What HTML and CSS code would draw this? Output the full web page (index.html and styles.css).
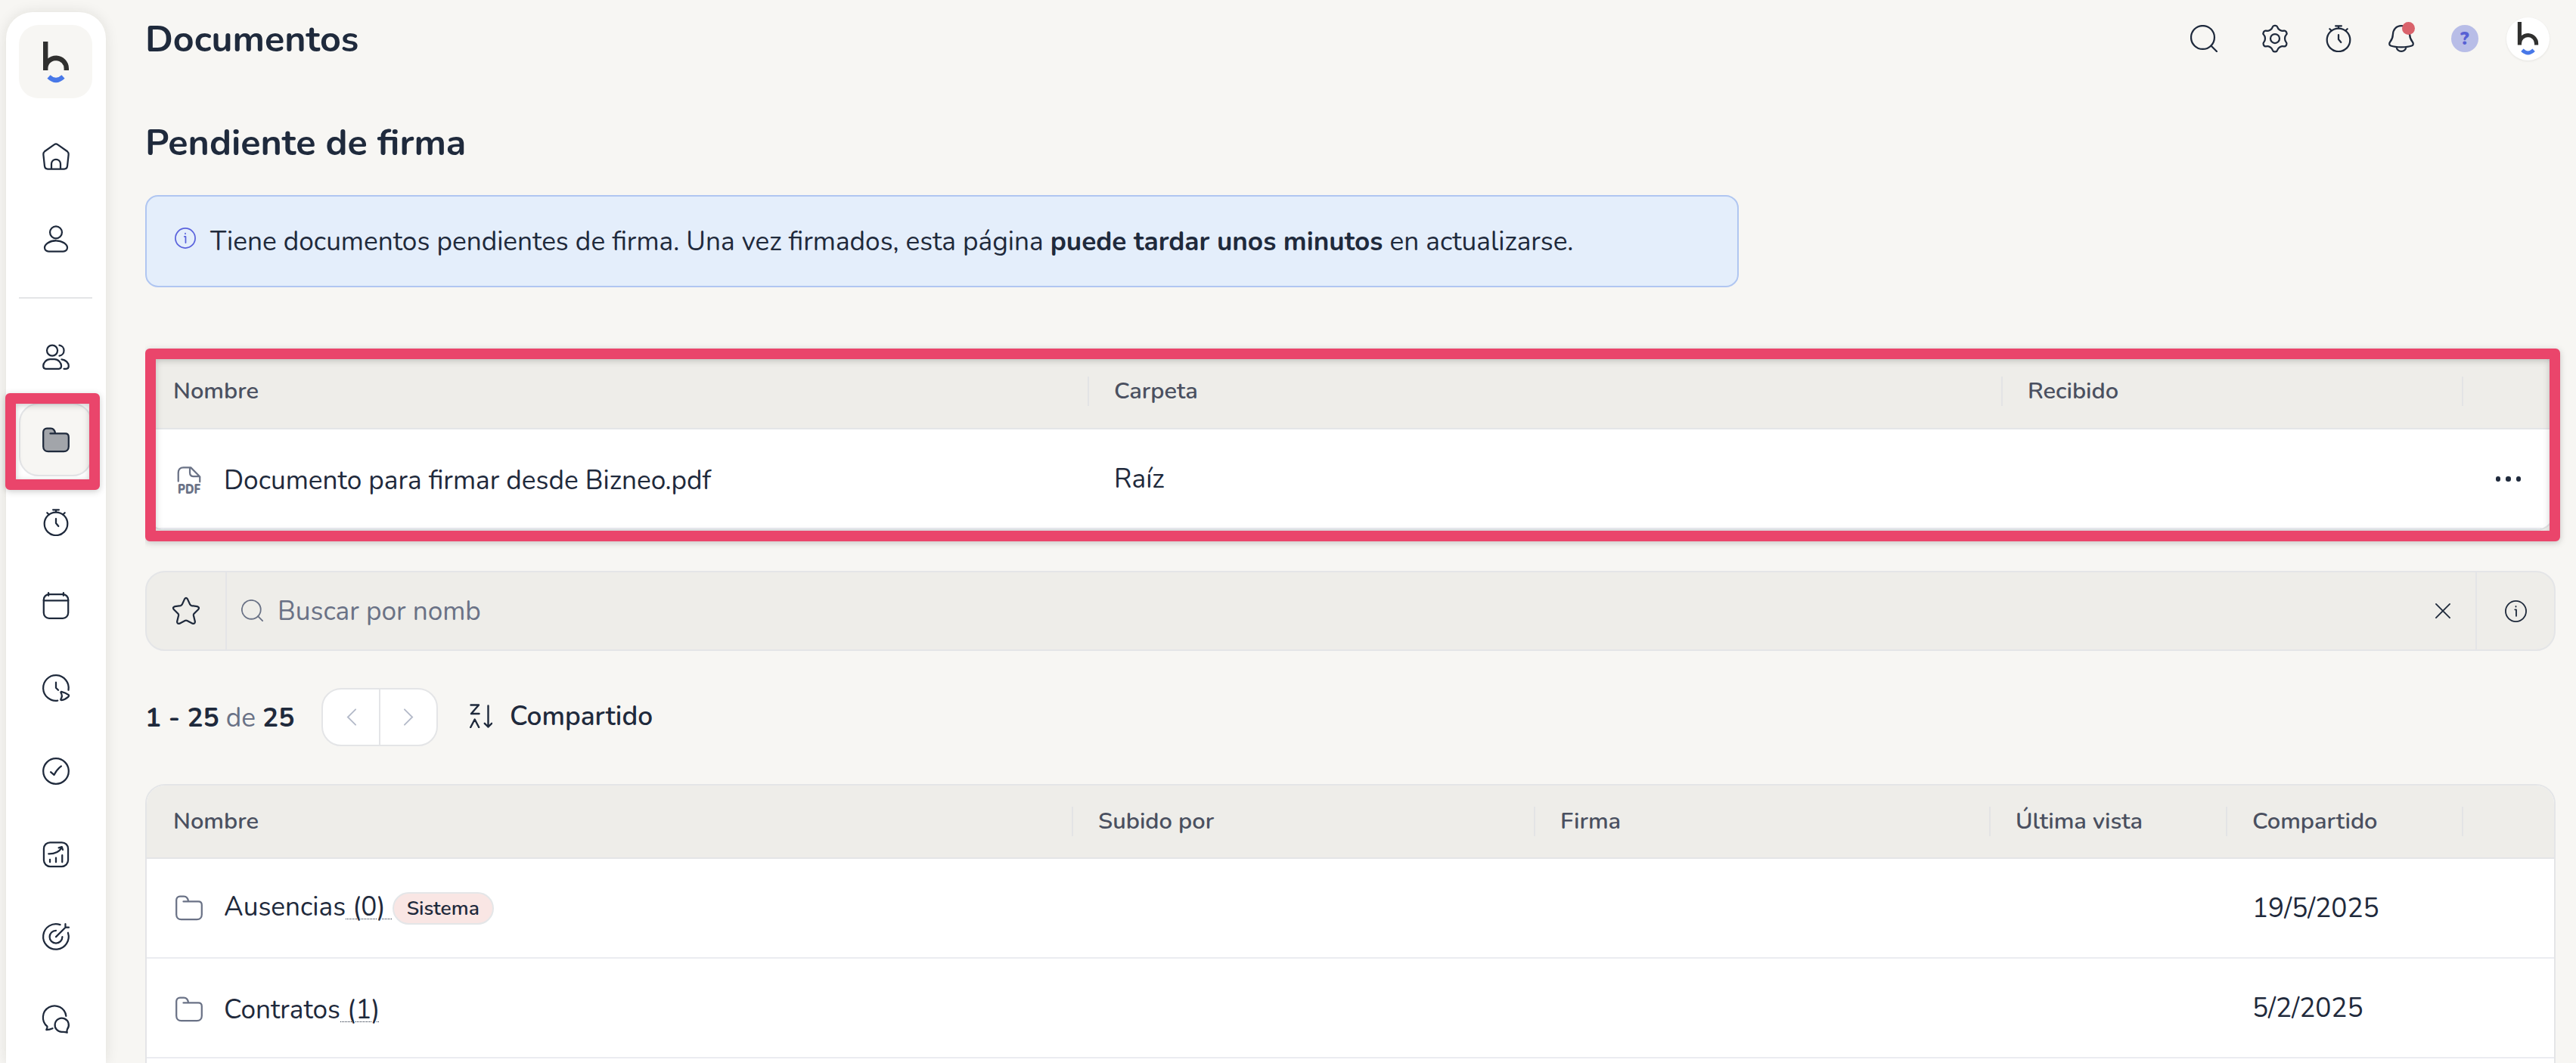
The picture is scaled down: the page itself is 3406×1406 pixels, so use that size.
FILE: index.html
```html
<!DOCTYPE html>
<html lang="es">
<head>
<meta charset="utf-8">
<title>Documentos</title>
<link rel="stylesheet" href="styles.css">
</head>
<body>
<svg width="0" height="0" class="defs" aria-hidden="true">
  <symbol id="folder" viewBox="0 0 24 24"><path d="M7 6.3H20.2c1.8 0 3 1.2 3 3v8.5c0 2.6-1.8 4.3-4.3 4.3H5.1c-2.5 0-4.3-1.7-4.3-4.3V5c0-1.9 1.3-3.2 3.2-3.2h3.4c2.3 0 3.6 1.6 4 4.5"/></symbol>
  <symbol id="stopwatch" viewBox="0 0 24 24"><circle cx="12" cy="13.2" r="10.2"/><path d="M9.4.9h5.2M12 .9v2M4.2 3.5 5.8 5M19.8 3.5 18.2 5M12 8.8v3.9l2.2 2.6"/></symbol>
  <symbol id="info" viewBox="0 0 24 24"><circle cx="12" cy="12" r="11.2"/><path d="M11 10.2h1.4v7M12 6.6v.5"/></symbol>
  <symbol id="search" viewBox="0 0 24 24"><circle cx="11" cy="11" r="10.3"/><path d="m18.3 18.3 5 5"/></symbol>
  <symbol id="brand" viewBox="0 0 36 56"><path d="M4.2 0v38M4.2 38V35.500a14.200 13.700 0 0 1 14.200-13.700 14.200 13.700 0 0 1 13.400 13.700V38" fill="none" stroke="#30302f" stroke-width="6.400"/><path d="M8.500 46.500Q18 55.500 27.500 46.500" fill="none" stroke="#4878e8" stroke-width="6"/></symbol>
</svg>

<nav class="sidebar">
  <div class="logo"><svg class="brand"><use href="#brand"/></svg></div>
  <a class="item"><svg class="icon" viewBox="0 0 24 24"><path d="M10.600 1.400 2 7.500Q.7 8.600.9 10.300L2 20.600Q2.300 23 4.700 23H19.300Q21.700 23 22 20.600L23.100 10.300Q23.300 8.600 22 7.500L13.400 1.400Q12 .5 10.600 1.400ZM8 23V18.500a4 4 0 0 1 8 0V23"/></svg></a>
  <a class="item"><svg class="icon" viewBox="0 0 24 24"><circle cx="12" cy="6.200" r="5.300"/><path d="M12 13.500c5.500 0 10 3.200 10 6.200 0 2-1.500 3.300-3.600 3.300H5.600C3.500 23 2 21.700 2 19.700c0-3 4.500-6.200 10-6.200Z"/></svg></a>
  <hr class="rule">
  <a class="item"><svg class="icon" viewBox="0 0 24 24"><circle cx="8.700" cy="6.400" r="4.700"/><path d="M15 1.800a4.700 4.700 0 0 1 0 9.300M6.800 14h3.900c3.300 0 6 3.200 6 6 0 1.800-.9 2.500-2.200 2.500H3C1.700 22.500.8 21.800.8 20c0-2.800 2.700-6 6-6ZM17 14.200c3.600.4 6.200 3 6.200 6 0 1.600-.9 2.300-2.200 2.300h-2"/></svg></a>
  <a class="item active"><span class="tile"><svg class="icon filled"><use href="#folder"/></svg></span><span class="callout callout-nav"></span></a>
  <a class="item"><svg class="icon"><use href="#stopwatch"/></svg></a>
  <a class="item"><svg class="icon" viewBox="0 0 24 24"><rect x="1.200" y="2" width="21.600" height="21.200" rx="4.800"/><path d="M1.200 7.600h21.600M5.400.7v2.500M18.600.7v2.500"/></svg></a>
  <a class="item"><svg class="icon" viewBox="0 0 24 24"><path d="M23 13.800A11.200 11.200 0 1 0 13.500 23.100M12 7v4.800l2 2M16.700 15.200q3.500.8 6.200 2.700.9.900 0 1.800-2.700 2.500-6.200 3-.8-.3-.3-1.200 1.600-2.600.1-5-.5-1 .2-1.300z"/></svg></a>
  <a class="item"><svg class="icon" viewBox="0 0 24 24"><circle cx="12" cy="12" r="11.200"/><path d="M7.400 12.800 10.300 15.300Q12.600 10.600 16.600 7.600"/></svg></a>
  <a class="item"><svg class="icon" viewBox="0 0 24 24"><rect x="1.300" y="1.500" width="21.400" height="21.200" rx="5.500"/><path d="M5.500 11.600Q13.500 11.800 17 6.200M14.400 6.200 17.200 5.400 18 8M6.700 16.500v2.400M12 15v3.900M17.500 12.800v6.100"/></svg></a>
  <a class="item"><svg class="icon" viewBox="0 0 24 24"><path d="M15.700 1.400A11.200 11.200 0 1 0 22.600 8.500M12 6.500a5.600 5.600 0 1 0 5.600 5.600M12 12.100 20.300 3.800M20.300 3.800V.8M20.300 3.800h3"/></svg></a>
  <a class="item"><svg class="icon" viewBox="0 0 24 24"><path d="M20.900 8.600A10.200 10.200 0 1 0 4.300 17.700Q4.500 19 3.500 20.700 6 20.800 9 19.500M22 20.200A6.100 6.100 0 1 0 17.500 22.600Q20 22.500 21.800 23.200 21.300 21.600 22 20.200Z"/></svg></a>
</nav>

<main class="main">
  <header class="topbar">
    <h1 class="title">Documentos</h1>
    <div class="tools">
      <span class="tool tool-search"><svg class="icon"><use href="#search"/></svg></span>
      <span class="tool"><svg class="icon" viewBox="0 0 24 24"><g transform="translate(12 12)"><path d="M-2.100-10.200Q-1.700-11.500-.4-11.500H.4Q1.700-11.500 2.100-10.200C2.700-8 5.580-6.340 7.780-6.920Q9.110-7.220 9.760-6.100L10.160-5.400Q10.810-4.280 9.880-3.280C8.280-1.660 8.280 1.660 9.880 3.280Q10.810 4.280 10.160 5.400L9.760 6.100Q9.110 7.220 7.780 6.920C5.580 6.340 2.700 8 2.100 10.200Q1.700 11.500.4 11.500H-.4Q-1.700 11.500-2.100 10.200C-2.700 8-5.580 6.340-7.780 6.920Q-9.110 7.220-9.760 6.100L-10.160 5.400Q-10.810 4.280-9.880 3.280C-8.280 1.660-8.280-1.660-9.880-3.280Q-10.810-4.280-10.160-5.400L-9.760-6.100Q-9.110-7.220-7.780-6.920C-5.580-6.340-2.700-8-2.100-10.200Z"/><circle r="4"/></g></svg></span>
      <span class="tool"><svg class="icon"><use href="#stopwatch"/></svg></span>
      <span class="tool"><svg class="icon" viewBox="0 0 24 24"><path d="M12 .8c-4.600 0-7.200 3.300-7.400 7.600-.1 3.400-.9 4.600-2.500 6.600-.9 1.200-.9 2.800.6 3.300 2.800 1 6 1.200 9.300 1.200s6.500-.2 9.300-1.200c1.500-.5 1.500-2.100.6-3.300-1.600-2-2.400-3.200-2.500-6.600C19.200 4.100 16.600.8 12 .8ZM7.600 19.500c.5 2.200 2.200 3.700 4.400 3.700s3.900-1.500 4.400-3.700"/></svg><i class="dot"></i></span>
      <span class="tool"><b class="help">?</b></span>
      <span class="tool"><span class="avatar"><svg class="brand brand-small"><use href="#brand"/></svg></span></span>
    </div>
  </header>

  <h2 class="subtitle">Pendiente de firma</h2>
  <div class="notice">
    <svg class="icon notice-icon"><use href="#info"/></svg>
    <p>Tiene documentos pendientes de firma. Una vez firmados, esta página <b>puede tardar unos minutos</b> en actualizarse.</p>
  </div>

  <section class="pending">
    <div class="table cols-pending">
      <div class="head"><span>Nombre</span><span>Carpeta</span><span>Recibido</span><span></span></div>
      <div class="row">
        <div class="cell name low">
          <svg class="icon soft" viewBox="0 0 24 24"><path d="M2.500 13V5.500C2.500 2.600 4.300.9 7 .9h6.500L21.500 9v4.500M12.700 1v4.500c0 2.100 1.200 3.300 3.300 3.300h5.200"/><text x="2" y="24" textLength="20" lengthAdjust="spacingAndGlyphs" class="pdf">PDF</text></svg>
          <span class="label">Documento para firmar desde Bizneo.pdf</span>
        </div>
        <div class="cell">Raíz</div>
        <div class="cell"></div>
        <div class="cell more"><i></i><i></i><i></i></div>
      </div>
    </div>
    <span class="callout callout-table"></span>
  </section>

  <div class="searchbar">
    <span class="fav"><svg class="icon" viewBox="0 0 24 24"><path d="M10.700 1.600Q12-.5 13.300 1.600L15.500 6.400Q15.900 7.200 16.800 7.400L21.800 8.100Q24.300 8.800 22.700 10.800L19 14.500Q18.500 15.200 18.600 16L19.900 21.300Q20 23.800 17.700 23.100L13 20.700Q12 20.200 11 20.700L6.300 23.100Q4 23.800 4.100 21.300L5.400 16Q5.500 15.200 5 14.500L1.300 10.800Q-.3 8.800 2.200 8.100L7.200 7.400Q8.100 7.200 8.500 6.400Z"/></svg></span>
    <span class="field"><svg class="icon soft thin"><use href="#search"/></svg><span>Buscar por nomb</span></span>
    <svg class="icon clear" viewBox="0 0 22 22"><path d="m1 1 20 20M21 1 1 21"/></svg>
    <span class="hint"><svg class="icon"><use href="#info"/></svg></span>
  </div>

  <div class="pager">
    <span class="range"><b>1 - 25</b> de <b>25</b></span>
    <span class="steps">
      <span><svg viewBox="0 0 14 24"><path d="M13 1 2 12l11 11"/></svg></span>
      <span><svg viewBox="0 0 14 24"><path d="m1 1 11 11L1 23"/></svg></span>
    </span>
    <span class="sort">
      <svg viewBox="0 0 30 32"><path d="M1.500 1.500h10.500L2 13h10.500M1.200 31 6.700 20.500 12.200 31M24.500 2.500v28M19.800 25.800l4.700 4.700 4.700-4.700"/></svg>
      <span>Compartido</span>
    </span>
  </div>

  <div class="table cols-docs">
    <div class="head"><span>Nombre</span><span>Subido por</span><span>Firma</span><span>Última vista</span><span>Compartido</span><span></span></div>
    <div class="row">
      <div class="cell name tagged">
        <svg class="icon soft"><use href="#folder"/></svg>
        <span class="label">Ausencias<span class="count"> (0) </span></span><span class="badge">Sistema</span>
      </div>
      <div class="cell"></div><div class="cell"></div><div class="cell"></div>
      <div class="cell">19/5/2025</div>
      <div class="cell"></div>
    </div>
    <div class="row">
      <div class="cell name low">
        <svg class="icon soft"><use href="#folder"/></svg>
        <span class="label">Contratos<span class="count"> (1)</span></span>
      </div>
      <div class="cell"></div><div class="cell"></div><div class="cell"></div>
      <div class="cell">5/2/2025</div>
      <div class="cell"></div>
    </div>
  </div>
</main>
</body>
</html>
```
FILE: styles.css
```css
* { box-sizing: border-box; }

:root {
  --ink: #1f2a3c;
  --soft: #6a7286;
  --line: #e4e5e7;
  --page: #f7f6f3;
  --shade: #eeede9;
  --pink: #ea456b;
}

body {
  margin: 0;
  height: 1406px;
  overflow: hidden;
  display: flex;
  background: var(--page);
  color: var(--ink);
  font: 400 35.2px/48px Nunito, "Noto Sans", sans-serif;
}

.defs { position: absolute; }

.icon {
  width: 36px;
  height: 36px;
  flex: none;
  display: block;
  overflow: visible;
  fill: none;
  stroke: var(--ink);
  stroke-width: 1.5;
  stroke-linecap: round;
  stroke-linejoin: round;
}
.soft { stroke: var(--soft); }
.filled { fill: #a2a5aa; }

/* Sidebar */
.sidebar {
  flex: none;
  width: 132px;
  height: 1390px;
  margin: 16px 0 0 8px;
  padding: 17px 1px 0 0;
  display: flex;
  flex-direction: column;
  align-items: center;
  background: #fff;
  border-radius: 35px 35px 0 0;
  box-shadow: 0 0 18px rgba(30, 30, 20, .1);
}
.logo {
  width: 97px;
  height: 97px;
  margin-bottom: 22px;
  display: flex;
  justify-content: center;
  padding-top: 22px;
  border-radius: 26px;
  background: var(--page);
}
.brand { width: 36px; height: 56px; display: block; }
.brand-small { width: 29px; height: 45px; }
.item {
  position: relative;
  width: 97px;
  height: 109.6px;
  flex: none;
  display: flex;
  align-items: center;
  justify-content: center;
}
.rule {
  width: 97px;
  height: 2px;
  margin: 22px 0;
  border: 0;
  flex: none;
  background: var(--line);
}
.tile {
  width: 97px;
  height: 97px;
  display: flex;
  align-items: center;
  justify-content: center;
  border: 2px solid var(--line);
  border-radius: 26px;
  background: var(--page);
}

/* Highlight frames drawn over the interface */
.callout {
  position: absolute;
  border: 14px solid var(--pink);
  border-radius: 6px;
  filter: drop-shadow(0 2px 4px rgba(0, 0, 0, .2));
}
.callout-nav { left: -18px; top: -7px; width: 125px; height: 128px; }
.callout-table { left: 0; top: -8px; width: 3193px; height: 255px; }

/* Page */
.main {
  flex: none;
  width: 3206px;
  height: 1406px;
  overflow: clip;
  margin-left: 52px;
  padding-right: 19px;
}
.topbar {
  height: 102px;
  display: flex;
  align-items: center;
  justify-content: space-between;
}
.title, .subtitle {
  margin: 0;
  font-size: 48.4px;
  line-height: 66px;
  font-weight: 700;
}
.title { padding-top: 2px; }
.subtitle { margin: 54px 0 36px; }
.tools { display: flex; margin-right: -5px; }
.tool {
  position: relative;
  width: 83.5px;
  height: 60px;
  display: flex;
  align-items: center;
  justify-content: center;
}
.tool-search { margin-right: 11px; }
.dot {
  position: absolute;
  left: 42px;
  top: 8px;
  width: 17px;
  height: 17px;
  border-radius: 50%;
  background: #d9626b;
}
.help {
  width: 36px;
  height: 36px;
  border-radius: 50%;
  background: #b8bde7;
  color: #5761d4;
  font-size: 24px;
  line-height: 37px;
  font-weight: 900;
  text-align: center;
}
.avatar {
  width: 57px;
  height: 57px;
  display: flex;
  justify-content: center;
  padding-top: 6px;
  border-radius: 50%;
  background: #fff;
  box-shadow: 0 1px 3px rgba(0, 0, 0, .08);
}

.notice {
  width: 2107px;
  height: 122px;
  padding-left: 37px;
  display: flex;
  align-items: center;
  gap: 19px;
  border: 2px solid #b0c6f1;
  border-radius: 17px;
  background: #e4eefb;
}
.notice p { margin: 0; }
.notice-icon {
  width: 28px;
  height: 28px;
  margin-bottom: 9px;
  stroke: #5a63dd;
}

/* Tables */
.table {
  width: 3187px;
  overflow: hidden;
  border: 2px solid var(--line);
  border-radius: 26px;
  background: #fff;
}
.cols-docs {
  height: 400px;
  border-radius: 26px 26px 0 0;
}
.head, .row { display: grid; }
.cols-pending > div { grid-template-columns: 1245px 1208px 609px 1fr; }
.cols-docs > div { grid-template-columns: 1224px 611px 602px 313px 312px 1fr; }
.head {
  height: 97px;
  border-bottom: 2px solid var(--line);
  background: var(--shade);
  color: #4a5060;
  font-size: 30.8px;
  font-weight: 600;
}
.head span {
  display: flex;
  align-items: center;
  padding-bottom: 1px;
}
.cols-pending .head span { padding-bottom: 3px; }
.head span:first-child { padding-left: 35px; }
.head span + span::before {
  content: "";
  width: 2px;
  height: 39px;
  margin: 0 33px 0 -1px;
  background: #e3e4e5;
}
.row { height: 132px; border-bottom: 2px solid #ebecf1; }
.cell {
  display: flex;
  align-items: center;
  padding-left: 34px;
}
.name { padding-left: 38px; }
.name .label { margin-left: 28px; white-space: pre; }
.low { padding-top: 3px; }
.tagged .label { margin-bottom: 5px; }
.count {
  text-decoration: underline dotted 1px;
  text-underline-offset: 4px;
}
.badge {
  height: 43px;
  padding: 0 17px;
  border: 2px solid #e4e6e8;
  border-radius: 22px;
  background: #f9e6e4;
  font-size: 26.4px;
  line-height: 39px;
  font-weight: 600;
}
.pdf {
  font-size: 11.500px;
  font-weight: 900;
  fill: var(--soft);
  stroke: none;
}
.more {
  gap: 7px;
  padding: 1px 0 0 44px;
}
.more i {
  width: 6.400px;
  height: 6.400px;
  border-radius: 50%;
  background: var(--ink);
}

.pending { position: relative; margin: 89px 0 53px; }

/* Search */
.searchbar {
  height: 106px;
  display: flex;
  align-items: center;
  border: 2px solid var(--line);
  border-radius: 26px;
  background: var(--shade);
}
.fav, .hint {
  align-self: stretch;
  display: flex;
  align-items: center;
  justify-content: center;
}
.fav { width: 106px; border-right: 2px solid var(--line); }
.hint { width: 104px; border-left: 2px solid var(--line); }
.hint .icon { width: 29px; height: 29px; }
.field {
  flex: 1;
  display: flex;
  align-items: center;
  gap: 19px;
  padding: 0 0 1px 19px;
  color: var(--soft);
}
.field .icon { width: 29px; height: 29px; }
.clear { width: 20px; height: 20px; margin-right: 33px; stroke-width: 2; }

/* Pagination and sorting */
.pager {
  height: 77px;
  margin: 49px 0 50px;
  display: flex;
  align-items: center;
}
.range { width: 233px; color: var(--soft); }
.range b { color: var(--ink); }
.steps {
  width: 154px;
  height: 77px;
  display: flex;
  border: 2px solid var(--line);
  border-radius: 26px;
  background: #fff;
}
.steps span {
  width: 74px;
  display: flex;
  align-items: center;
  justify-content: center;
}
.steps span + span { width: 76px; border-left: 2px solid var(--line); }
.steps svg {
  width: 13px;
  height: 23px;
  fill: none;
  stroke: #b4bac9;
  stroke-width: 2;
  stroke-linecap: round;
}
.sort {
  display: flex;
  align-items: center;
  gap: 23px;
  margin: 0 0 4px 42px;
  font-weight: 600;
}
.sort svg {
  width: 30px;
  height: 32px;
  fill: none;
  stroke: var(--ink);
  stroke-width: 2.400;
  stroke-linecap: round;
  stroke-linejoin: round;
}
```
